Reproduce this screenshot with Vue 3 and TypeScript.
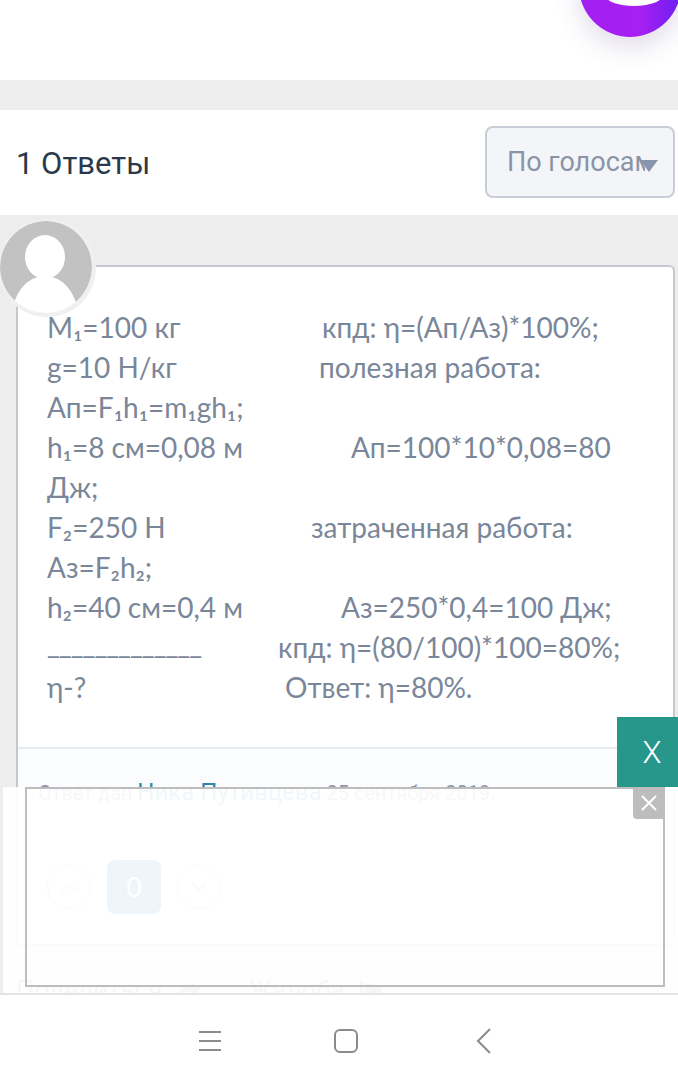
<script setup lang="ts">
interface Line {
  left: string;
  right?: string;
  indent?: number;
  rule?: boolean;
}

const lines: Line[] = [
  { left: "M₁=100 кг", right: "кпд: η=(Ап/Аз)*100%;", indent: 275 },
  { left: "g=10 Н/кг", right: "полезная работа:", indent: 272 },
  { left: "Ап=F₁h₁=m₁gh₁;" },
  { left: "h₁=8 см=0,08 м", right: "Ап=100*10*0,08=80", indent: 304 },
  { left: "Дж;" },
  { left: "F₂=250 Н", right: "затраченная работа:", indent: 264 },
  { left: "Аз=F₂h₂;" },
  { left: "h₂=40 см=0,4 м", right: "Аз=250*0,4=100 Дж;", indent: 294 },
  { left: "_____________", right: "кпд: η=(80/100)*100=80%;", indent: 231, rule: true },
  { left: "η-?", right: "Ответ: η=80%.", indent: 238 },
];
</script>

<template>
  <div class="page">
    <div class="top"></div>
    <div class="answers-head">
      <h2>1 Ответы</h2>
      <div class="sort">
        <span class="sort-text">По голосам</span>
        <span class="sort-caret"></span>
      </div>
    </div>

    <div class="answers">
      <div class="card">
        <div class="card-body">
          <div v-for="(line, i) in lines" :key="i" class="line">
            <span class="cell" :class="{ rule: line.rule }">{{ line.left }}</span>
            <span v-if="line.right" class="cell" :style="{ paddingLeft: line.indent + 'px' }">{{ line.right }}</span>
          </div>
        </div>
        <div class="card-footer">
          <p class="meta">Ответ дан <a>Ника Путивцева</a> 25 сентября 2019.</p>
          <div class="votes">
            <span class="vote-btn">
              <svg width="18" height="10" viewBox="0 0 18 10"><path d="M2 9l7-7 7 7" /></svg>
            </span>
            <span class="vote-count">0</span>
            <span class="vote-btn">
              <svg width="18" height="10" viewBox="0 0 18 10"><path d="M2 1l7 7 7-7" /></svg>
            </span>
          </div>
        </div>
      </div>
      <div class="actions">
        <span>Поделиться</span>
        <svg width="26" height="20" viewBox="0 0 28 20"><path d="M16 1l11 8-11 8v-5C9 12 5 14 1 19c1-8 6-13 15-13z" /></svg>
        <span class="report">Жалоба</span>
        <svg width="24" height="20" viewBox="0 0 26 20"><path d="M1 1h3v18H1zM6 3h8l2 2h9v12H6z" /></svg>
      </div>
    </div>

    <!-- purple round button, cut by the top of the screen -->
    <div class="fab"><span class="fab-mouth"></span></div>
    <div class="avatar">
      <svg width="92" height="92" viewBox="0 0 92 92">
        <circle cx="46" cy="46" r="46" fill="#c2c2c2" />
        <ellipse cx="45" cy="36" rx="20" ry="22" fill="#fff" />
        <ellipse cx="45" cy="96" rx="33" ry="41" fill="#fff" />
      </svg>
    </div>

    <!-- ad layer over the bottom of the page -->
    <div class="ad-layer">
      <button class="ad-hide">X</button>
      <div class="ad-frame">
        <span class="ad-close">
          <svg width="16" height="16" viewBox="0 0 16 16"><path d="M1 1l14 14M15 1L1 15" /></svg>
        </span>
      </div>
    </div>

    <nav class="navbar">
      <svg width="24" height="22" viewBox="0 0 24 22"><path d="M1 2h22M1 11h22M1 20h22" /></svg>
      <svg width="26" height="26" viewBox="0 0 26 26"><rect x="2" y="2" width="22" height="22" rx="5" /></svg>
      <svg width="18" height="28" viewBox="0 0 18 28"><path d="M15 2L3 14l12 12" /></svg>
    </nav>
  </div>
</template>

<style scoped>
.page {
  position: relative;
  width: 678px;
  height: 1065px;
  overflow: hidden;
  background: #fff;
  font-family: Lato, "Open Sans", sans-serif;
  color: #2c3a4b;
}

.top {
  height: 80px;
  border-bottom: 30px solid #ededed;
}

.answers-head {
  height: 105px;
  padding: 0 3px 2px 16px;
  box-sizing: border-box;
  display: flex;
  align-items: center;
  justify-content: space-between;
}

.answers-head h2 {
  margin: 4px 0 0;
  font-size: 31px;
  font-weight: 400;
  font-family: Roboto, sans-serif;
  color: #2b3a4a;
}

.sort {
  position: relative;
  width: 190px;
  height: 72px;
  box-sizing: border-box;
  padding-left: 20px;
  border: 2px solid #c9ced6;
  border-radius: 8px;
  background: #f3f5f9;
  display: flex;
  align-items: center;
  overflow: hidden;
}

.sort-text {
  width: 138px;
  overflow: hidden;
  font-family: Roboto, sans-serif;
  font-size: 27px;
  color: #8a94a6;
  white-space: nowrap;
}

.sort-caret {
  position: absolute;
  right: 15px;
  top: 32px;
  border-left: 9px solid transparent;
  border-right: 9px solid transparent;
  border-top: 12px solid #8795ae;
}

.answers {
  background: #ededed;
  padding: 50px 3px 0 16px;
  height: 778px;
}

.card {
  background: #fff;
  border: 2px solid #c5c8cf;
  border-radius: 6px;
}

.card-body {
  padding: 40px 0 40px 29px;
  height: 400px;
}

.line {
  display: grid;
  height: 40px;
  line-height: 40px;
  font-size: 28px;
  color: #7a8699;
  white-space: pre;
}

.cell {
  grid-area: 1 / 1;
}

.rule {
  line-height: 32px;
  letter-spacing: -1px;
}

.card-footer {
  border-top: 2px solid #e8ebef;
  background: #fbfcfd;
  padding: 29px 20px 30px 20px;
  height: 136px;
}

.meta {
  margin: 0;
  font-family: Roboto, sans-serif;
  font-size: 20px;
  color: #8a94a6;
}

.meta a {
  color: #2f87a8;
  font-size: 24px;
}

.votes {
  margin-top: 54px;
  padding-left: 9px;
  display: flex;
  align-items: center;
  gap: 16px;
}

.vote-btn {
  width: 42px;
  height: 42px;
  border: 1px solid #aab0ba;
  border-radius: 50%;
  display: flex;
  align-items: center;
  justify-content: center;
}

.vote-btn svg path {
  fill: none;
  stroke: #b0b6c0;
  stroke-width: 2;
}

.vote-count {
  width: 54px;
  height: 54px;
  border-radius: 8px;
  background: #1e82c0;
  color: #fff;
  font-size: 26px;
  display: flex;
  align-items: center;
  justify-content: center;
}

.actions {
  margin-top: 29px;
  display: flex;
  align-items: center;
  gap: 14px;
  font-family: Roboto, sans-serif;
  font-size: 26px;
  color: #7a8699;
}

.actions svg path {
  fill: #7a8699;
}

.report {
  margin-left: 32px;
}

.fab {
  position: absolute;
  left: 579px;
  top: -65px;
  width: 102px;
  height: 102px;
  border-radius: 50%;
  background: linear-gradient(90deg, #a020f0, #a81ff2 60%, #6a1ff0);
  box-shadow: 0 10px 26px rgba(90, 60, 140, 0.18);
}

.fab-mouth {
  position: absolute;
  left: 28px;
  top: 53px;
  width: 54px;
  height: 18px;
  background: #fff;
  border-radius: 50%;
}

.avatar {
  position: absolute;
  left: 0;
  top: 221px;
  width: 92px;
  height: 92px;
  border-radius: 50%;
  box-shadow: 1px 1px 0 3px #f0f0f0;
}

.avatar svg {
  display: block;
  border-radius: 50%;
}

.ad-layer {
  position: absolute;
  left: 3px;
  right: 0;
  top: 787px;
  height: 206px;
  background: rgba(255, 255, 255, 0.93);
}

.ad-hide {
  position: absolute;
  right: 0;
  top: -70px;
  width: 61px;
  height: 70px;
  border: 0;
  padding: 0 0 0 9px;
  background: #26978a;
  color: #fff;
  font-family: Roboto, sans-serif;
  font-size: 31px;
  font-weight: 300;
}

.ad-frame {
  position: absolute;
  left: 22px;
  top: 0;
  width: 640px;
  height: 200px;
  box-sizing: border-box;
  border: 2px solid #bdbdbd;
}

.ad-close {
  position: absolute;
  right: -2px;
  top: -2px;
  width: 32px;
  height: 32px;
  background: #bdbdbd;
  border-bottom-left-radius: 4px;
  display: flex;
  align-items: center;
  justify-content: center;
}

.ad-close svg path {
  stroke: #fff;
  stroke-width: 2;
}

.navbar {
  position: absolute;
  left: 0;
  right: 0;
  bottom: 0;
  height: 72px;
  box-sizing: border-box;
  border-top: 2px solid #e4e4e4;
  background: #fff;
  padding: 21px 0 0 198px;
  display: flex;
  align-items: center;
  gap: 111px;
}

.navbar svg:last-child {
  margin-left: 5px;
}

.navbar svg path,
.navbar svg rect {
  fill: none;
  stroke: #8b8b8b;
  stroke-width: 2;
}
</style>
